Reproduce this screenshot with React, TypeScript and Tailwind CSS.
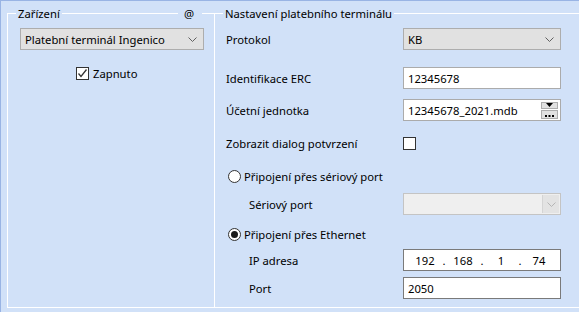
import React from 'react';

const font = { fontFamily: '"Noto Sans", "Liberation Sans", sans-serif' };

const Chevron = ({ light }: { light?: boolean }) => (
  <svg width="9" height="5" viewBox="0 0 9 5" className="shrink-0">
    <polyline points="0.5,0.5 4.5,4.5 8.5,0.5" fill="none" stroke={light ? '#b5b5b5' : '#606060'} strokeWidth="1" />
  </svg>
);

const Combo = ({ value, width }: { value: string; width: string }) => (
  <div className={`${width} h-[22px] flex items-center border border-[#adadad] bg-[#e1e1e1] pl-[4px] pr-[6px]`}>
    <span className="flex-1 truncate">{value}</span>
    <Chevron />
  </div>
);

const TextBox = ({ value, dark }: { value: string; dark?: boolean }) => (
  <div
    className={`w-[158px] h-[22px] flex items-center border bg-white pl-[4px] ${dark ? 'border-[#7a7a7a]' : 'border-[#ababab]'}`}
  >
    {value}
  </div>
);

const CheckBox = ({ checked }: { checked?: boolean }) => (
  <div className="w-[13px] h-[13px] border border-[#333333] bg-white flex items-center justify-center shrink-0">
    {checked && (
      <svg width="11" height="11" viewBox="0 0 11 11">
        <polyline points="1.5,5.5 4,8.5 9.5,1.5" fill="none" stroke="#333333" strokeWidth="1.3" />
      </svg>
    )}
  </div>
);

const Radio = ({ checked }: { checked?: boolean }) => (
  <div className="w-[13px] h-[13px] rounded-full border border-[#333333] bg-white flex items-center justify-center shrink-0">
    {checked && <div className="w-[7px] h-[7px] rounded-full bg-[#1a1a1a]" />}
  </div>
);

const Row = ({ label, indent, mt, children }: { label: string; indent?: boolean; mt: string; children?: React.ReactNode }) => (
  <div className={`${mt} h-[22px] flex items-center`}>
    <span className={`w-[188px] shrink-0 ${indent ? 'pl-[34px]' : 'pl-[11px]'}`}>{label}</span>
    {children}
  </div>
);

const RadioRow = ({ label, checked, mt }: { label: string; checked?: boolean; mt: string }) => (
  <div className={`${mt} h-[22px] flex items-center pl-[13px] gap-[3px]`}>
    <Radio checked={checked} />
    <span>{label}</span>
  </div>
);

export default function App() {
  const ip = ['192', '168', '1', '74'];
  return (
    <div
      className="w-[579px] h-[312px] overflow-hidden bg-[#d1e1f8] border-t border-l border-[#99b4e4] flex text-[11.25px] leading-[15px] text-black"
      style={font}
    >
      {/* Zařízení */}
      <div className="ml-[6px] mt-[12px] w-[207px] h-[295px] shrink-0 border-l border-t border-b border-white flex flex-col">
        <div className="-mt-[8px] h-[15px] flex items-center">
          <span className="ml-[8px] px-[2px] bg-[#d1e1f8]">Zařízení</span>
          <span className="ml-auto mr-[12px] pl-[6px] pr-[8px] bg-[#d1e1f8]">@</span>
        </div>
        <div className="ml-[12px] mt-[7px]">
          <Combo value="Platební terminál Ingenico" width="w-[184px]" />
        </div>
        <div className="mt-[16px] pl-[68px] flex items-center gap-[4px]">
          <CheckBox checked />
          <span>Zapnuto</span>
        </div>
      </div>

      {/* Nastavení platebního terminálu */}
      <div className="mt-[12px] w-[380px] h-[295px] shrink-0 border-l border-t border-b border-white flex flex-col">
        <div className="-mt-[8px] h-[15px] flex items-center">
          <span className="ml-[8px] px-[2px] bg-[#d1e1f8]">Nastavení platebního terminálu</span>
        </div>
        <Row label="Protokol" mt="mt-[7px]">
          <Combo value="KB" width="w-[158px]" />
        </Row>
        <Row label="Identifikace ERC" mt="mt-[17px]">
          <TextBox value="12345678" />
        </Row>
        <Row label="Účetní jednotka" mt="mt-[10px]">
          <div className="w-[158px] h-[22px] flex items-center border border-[#ababab] bg-white pl-[4px] pr-[2px]">
            <span className="flex-1">12345678_2021.mdb</span>
            <div className="w-[17px] h-[17px] flex flex-col gap-[1px]">
              <div className="flex-1 bg-[#e1e1e1] border border-[#adadad] flex items-center justify-center">
                <svg width="7" height="4" viewBox="0 0 7 4">
                  <polygon points="0,0 7,0 3.5,4" fill="#000" />
                </svg>
              </div>
              <div className="flex-1 bg-[#e1e1e1] border border-[#adadad] flex items-end justify-center pb-[1px]">
                <svg width="9" height="2" viewBox="0 0 9 2">
                  <rect x="0" y="0" width="2" height="2" fill="#000" />
                  <rect x="3.5" y="0" width="2" height="2" fill="#000" />
                  <rect x="7" y="0" width="2" height="2" fill="#000" />
                </svg>
              </div>
            </div>
          </div>
        </Row>
        <Row label="Zobrazit dialog potvrzení" mt="mt-[11px]">
          <CheckBox />
        </Row>
        <RadioRow label="Připojení přes sériový port" mt="mt-[11px]" />
        <Row label="Sériový port" indent mt="mt-[6px]">
          <div className="w-[158px] h-[22px] flex items-center justify-end border border-[#c4c4c4] bg-[#efefef] p-[1px]">
            <div className="w-[17px] h-full bg-[#e3e3e3] border-l border-[#d4d4d4] flex items-center justify-center">
              <Chevron light />
            </div>
          </div>
        </Row>
        <RadioRow label="Připojení přes Ethernet" checked mt="mt-[8px]" />
        <Row label="IP adresa" indent mt="mt-[4px]">
          <div className="w-[158px] h-[22px] flex items-center border border-[#7a7a7a] bg-white pl-[4px]">
            {ip.map((part, i) => (
              <React.Fragment key={i}>
                <span className="w-[34px] text-center">{part}</span>
                {i < 3 && <span className="w-[4px] text-center">.</span>}
              </React.Fragment>
            ))}
          </div>
        </Row>
        <Row label="Port" indent mt="mt-[6px]">
          <TextBox value="2050" dark />
        </Row>
      </div>
    </div>
  );
}
